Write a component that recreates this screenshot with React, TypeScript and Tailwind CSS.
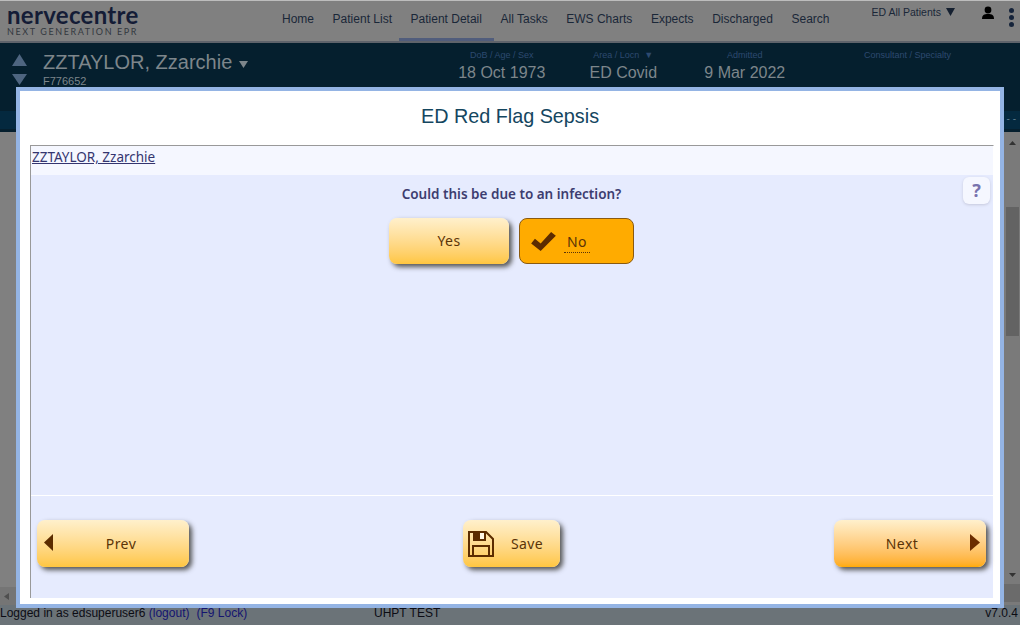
const navItems = ['Home', 'Patient List', 'Patient Detail', 'All Tasks', 'EWS Charts', 'Expects', 'Discharged', 'Search']

const bannerCols = [
  { label: 'DoB / Age / Sex', value: '18 Oct 1973' },
  { label: 'Area / Locn  ▼', value: 'ED Covid' },
  { label: 'Admitted', value: '9 Mar 2022' },
]

const Triangle = ({ dir, className }: { dir: 'up' | 'down' | 'left' | 'right'; className: string }) => {
  const points = { up: '0,10 5,0 10,10', down: '0,0 10,0 5,10', left: '10,0 10,10 0,5', right: '0,0 10,5 0,10' }[dir]
  return (
    <svg viewBox="0 0 10 10" preserveAspectRatio="none" className={className}>
      <polygon points={points} fill="currentColor" />
    </svg>
  )
}

const Header = () => (
  <div className="flex h-[43px] flex-none border-t border-b-2 border-t-[#bdbdbd] border-b-[#5f636b] bg-[#808080]">
    <div className="ml-[7px] flex w-[250px] flex-col pt-[3px] font-['Lato',sans-serif]">
      <span className="text-[24px] leading-[22px] font-bold tracking-[0.3px] text-[#141c36]">nervecentre</span>
      <span className="text-[9px] leading-[11px] tracking-[1.6px] text-[#33383f]">NEXT GENERATION EPR</span>
    </div>
    <div className="ml-[25px] flex gap-[18.6px] pt-[11px] text-[12px] leading-[14px] text-[#1a2738]">
      {navItems.map(item => (
        <div key={item} className={item === 'Patient Detail' ? 'mx-[-12px] h-[29px] border-b-[3px] border-[#515d7c] px-[12px]' : ''}>
          {item}
        </div>
      ))}
    </div>
    <div className="ml-[42px] flex pt-[4px] text-[10.5px] leading-[14px] text-[#1a2738]">
      <span>ED All Patients</span>
      <Triangle dir="down" className="mt-[3px] ml-[5px] h-[8px] w-[9px] text-[#152030]" />
    </div>
    <svg viewBox="0 0 14 14" className="mt-[5px] ml-[26px] h-[14px] w-[14px] text-black">
      <circle cx="7" cy="4" r="3.4" fill="currentColor" />
      <path d="M1 13c0-4 2-5 6-5s6 1 6 5z" fill="currentColor" />
    </svg>
    <div className="mt-[7px] ml-[14px] flex flex-col gap-[2px]">
      <div className="h-[5px] w-[5px] rounded-full bg-[#15233a]" />
      <div className="h-[5px] w-[5px] rounded-full bg-[#15233a]" />
      <div className="h-[5px] w-[5px] rounded-full bg-[#15233a]" />
    </div>
  </div>
)

const Banner = () => (
  <div className="flex h-[68px] flex-none bg-[#051f2e]">
    <div className="flex w-[441px] flex-none">
      <div className="ml-[12px] flex flex-col gap-[8px] pt-[11px] text-[#4e6580]">
        <Triangle dir="up" className="h-[12px] w-[15px]" />
        <Triangle dir="down" className="h-[11px] w-[15px]" />
      </div>
      <div className="ml-[16px] pt-[8px] text-[#7d868b]">
        <div className="flex items-center text-[20px] leading-[23px]">
          ZZTAYLOR, Zzarchie
          <Triangle dir="down" className="mt-[4px] ml-[7px] h-[7px] w-[9px]" />
        </div>
        <div className="mt-[1px] text-[11px] leading-[13px]">F776652</div>
      </div>
    </div>
    {bannerCols.map(col => (
      <div key={col.label} className="w-[121.5px] flex-none pt-[7px] text-center">
        <div className="text-[9px] leading-[11px] whitespace-pre text-[#2d4a70]">{col.label}</div>
        <div className="mt-[2px] text-[16px] leading-[20px] text-[#7d868b]">{col.value}</div>
      </div>
    ))}
    <div className="w-[204px] flex-none pt-[7px] text-center text-[9px] leading-[11px] text-[#2d4a70]">Consultant / Specialty</div>
  </div>
)

const PageBehind = () => (
  <div className="flex h-full flex-col">
    <Header />
    <Banner />
    <div className="flex h-[18px] flex-none justify-end bg-[#04293f] pr-[4px] text-[10px] leading-[16px] text-[#5d7a8c]">- -</div>
    <div className="h-[3px] flex-none bg-[#051f2e]" />
    <div className="flex min-h-0 flex-1">
      <div className="flex flex-1 flex-col justify-end bg-[#808080]">
        <div className="flex h-[18px] items-center bg-[#757575] pl-[4px] text-[#4f4f4f]">
          <Triangle dir="left" className="h-[7px] w-[5px]" />
        </div>
      </div>
      <div className="flex w-[16px] flex-none flex-col items-center bg-[#7a7a7a]">
        <Triangle dir="up" className="mt-[9px] h-[4px] w-[7px] text-[#333333]" />
        <div className="mt-[62px] h-[129px] w-[13px] bg-[#636363]" />
        <Triangle dir="down" className="mt-[237px] h-[4px] w-[7px] text-[#333333]" />
        <div className="mt-[7px] h-[18px] w-full bg-[#6b6b6b]" />
      </div>
    </div>
    <div className="flex h-[20px] flex-none bg-[#6b7378] pt-[1px] text-[12px] leading-[14px] text-[#0c0c14]">
      <span className="w-[374px]">
        Logged in as edsuperuser6 <span className="text-[#141470]">(logout)</span>
        <span className="ml-[7px] text-[#141470]">(F9 Lock)</span>
      </span>
      <span>UHPT TEST</span>
      <span className="ml-auto pr-[2px]">v7.0.4</span>
    </div>
  </div>
)

const buttonText = "font-['Noto_Sans',sans-serif] text-[14px] tracking-[0.4px] text-[#5a3408]"
const raised = 'rounded-[8px] bg-gradient-to-b from-[#fff0cc] to-[#ffc63f] shadow-[3px_3px_5px_#555555]'

const FloppyIcon = () => (
  <svg viewBox="0 0 26 26" className="h-[26px] w-[26px] text-[#5c2c00]" fill="none" stroke="currentColor" strokeWidth="2">
    <path d="M1 1h17l7 7v17H1z" />
    <path d="M6 1v8h11V1" />
    <rect x="12" y="2" width="4" height="6" fill="#fff8e6" stroke="none" />
    <rect x="6" y="2" width="6" height="7" fill="currentColor" stroke="none" />
    <path d="M5 25V15h16v10" />
  </svg>
)

const Form = () => (
  <div className="mr-[6px] ml-[10px] flex h-[453px] flex-col border-t border-r border-l border-t-[#999999] border-r-white border-l-[#999999] bg-[#e6ebfe] font-['Noto_Sans',sans-serif]">
    <div className="h-[29px] flex-none bg-[#f5f7ff] pt-[2px] pl-[1px] text-[13.5px] leading-[18px] text-[#34356f] underline">ZZTAYLOR, Zzarchie</div>
    <div className="relative flex h-[321px] flex-none flex-col items-center border-b border-white pt-[10px] pr-[1px]">
      <div className="text-[13.5px] leading-[19px] font-semibold text-[#3d3d70]">Could this be due to an infection?</div>
      <div className="absolute top-[2px] right-[3px] flex h-[27px] w-[27px] items-center justify-center rounded-[6px] bg-[#f5f7ff] text-[18px] font-bold text-[#7873ae] shadow-[0_1px_3px_#c5c8dc]">?</div>
      <div className="mt-[14px] flex gap-[10px]">
        <div className={`flex h-[46px] w-[120px] items-center justify-center pb-[2px] ${raised} ${buttonText}`}>Yes</div>
        <div className={`flex h-[46px] w-[115px] items-center rounded-[8px] border border-[#8a5a10] bg-[#ffab00] pl-[11px] ${buttonText}`}>
          <svg viewBox="0 0 26 20" className="h-[19px] w-[25px] text-[#5c2c00]">
            <path d="M0 12l4-5 6 5L21 0l5 4-16 16z" fill="currentColor" />
          </svg>
          <span className="mt-[4px] ml-[8px] border-b border-dotted border-[#5a3408] px-[3px] pb-[3px] leading-[15px]">No</span>
        </div>
      </div>
    </div>
    <div className="flex justify-between pt-[24px] pr-[7px] pl-[6px]">
      <div className={`flex h-[47px] w-[152px] items-center pl-[7px] ${raised} ${buttonText}`}>
        <Triangle dir="left" className="mb-[2px] h-[17px] w-[9px] text-[#5c2c00]" />
        <span className="flex-1 text-center">Prev</span>
      </div>
      <div className={`flex h-[47px] w-[97px] items-center gap-[17px] pl-[5px] ${raised} ${buttonText}`}>
        <FloppyIcon />
        <span>Save</span>
      </div>
      <div className={`flex h-[47px] w-[152px] items-center rounded-[8px] bg-gradient-to-b from-[#fff0cc] to-[#ffab00] pr-[6px] shadow-[3px_3px_5px_#555555] ${buttonText}`}>
        <span className="flex-1 text-center">Next</span>
        <Triangle dir="right" className="mb-[2px] h-[17px] w-[10px] text-[#6b2c00]" />
      </div>
    </div>
  </div>
)

export default function App() {
  return (
    <div className="relative h-[625px] w-[1020px] overflow-hidden font-['Liberation_Sans',sans-serif]">
      <PageBehind />
      <div className="absolute top-[87px] left-[16px] h-[521px] w-[988px] border-4 border-[#94b4e4] bg-white">
        <div className="flex h-[54px] items-center justify-center pb-[3px] text-[19.8px] text-[#14465f]">ED Red Flag Sepsis</div>
        <Form />
      </div>
    </div>
  )
}
